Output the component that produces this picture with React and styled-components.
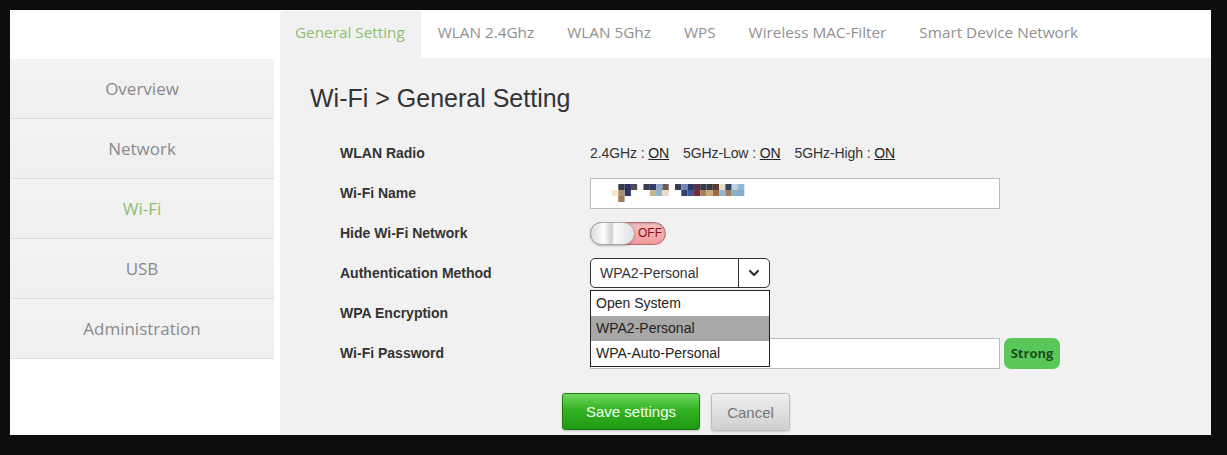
import React from 'react';
import styled, { createGlobalStyle } from 'styled-components';
import { ChevronDown } from 'lucide-react';

const GlobalStyle = createGlobalStyle`
	html, body {
		margin: 0;
		padding: 0;
		background: #0d0d0d;
	}
	* {
		box-sizing: border-box;
	}
`;

const tabs = ['General Setting', 'WLAN 2.4Ghz', 'WLAN 5Ghz', 'WPS', 'Wireless MAC-Filter', 'Smart Device Network'];
const menu = ['Overview', 'Network', 'Wi-Fi', 'USB', 'Administration'];
const authOptions = ['Open System', 'WPA2-Personal', 'WPA-Auto-Personal'];

// blurred ssid, drawn as a mosaic
const mosaic = [
	[0, 1, '#f3e7c8'], [1, 0, '#3a3a48'], [2, 0, '#27305a'], [2, 1, '#2c3566'], [1, 1, '#a88e6c'], [1, 2, '#9a7a58'],
	[3, 0, '#4a4a58'],
	[5, 0, '#3b3b4a'], [6, 0, '#2f3a6a'], [6, 1, '#c9b48e'], [7, 1, '#8fb1cf'], [7, 0, '#8aa6c6'], [8, 0, '#6d5a58'], [8, 1, '#e9dfc9'],
	[10, 0, '#3a3d55'], [11, 0, '#6f87b3'], [11, 1, '#34406e'], [12, 0, '#2a3563'], [12, 1, '#3f5a92'], [13, 0, '#57344a'],
	[13, 1, '#7a2a34'], [14, 1, '#a87e5c'], [14, 0, '#3a3a4a'], [15, 0, '#3a3a42'], [15, 1, '#c9ac7c'], [16, 0, '#5a3a30'], [16, 1, '#9a6a4a'], [17, 0, '#e8dcc0'],
	[17, 1, '#8fb4d6'], [18, 0, '#35425f'], [18, 1, '#a47c5a'], [19, 0, '#bcd0e2'], [19, 1, '#8ab0cf'], [20, 0, '#8fb6d2'],
	[20, 1, '#86acca'],
];

export default function App() {
	return (
		<>
			<GlobalStyle />
			<Frame>
				<Window>
					<TabBar>
						{tabs.map((t, i) => (
							<Tab key={t} active={i === 0}>
								{t}
							</Tab>
						))}
					</TabBar>
					<Sidebar>
						{menu.map((m) => (
							<MenuItem key={m} active={m === 'Wi-Fi'}>
								{m}
							</MenuItem>
						))}
					</Sidebar>
					<Main>
						<Title>Wi-Fi &gt; General Setting</Title>
						<Form>
							<Row>
								<Label>WLAN Radio</Label>
								<Value>
									<Radio>
										2.4GHz : <u>ON</u>
									</Radio>
									<Radio>
										5GHz-Low : <u>ON</u>
									</Radio>
									<Radio>
										5GHz-High : <u>ON</u>
									</Radio>
								</Value>
							</Row>
							<Row>
								<Label>Wi-Fi Name</Label>
								<Value>
									<TextBox>
										<svg width='140' height='18' viewBox='0 0 140 18'>
											{mosaic.map(([c, r, col], i) => (
												<rect key={i} x={c * 6.3} y={r * 6} width='6.3' height='6' fill={col} />
											))}
										</svg>
									</TextBox>
								</Value>
							</Row>
							<Row>
								<Label>Hide Wi-Fi Network</Label>
								<Value>
									<Toggle>
										<Knob />
										<ToggleText>OFF</ToggleText>
									</Toggle>
								</Value>
							</Row>
							<Row>
								<Label>Authentication Method</Label>
								<Value>
									<SelectWrap>
										<Select>
											<SelectText>WPA2-Personal</SelectText>
											<SelectArrow>
												<ChevronDown size={16} strokeWidth={3.2} color='#333' />
											</SelectArrow>
										</Select>
										<Options>
											{authOptions.map((o) => (
												<Option key={o} selected={o === 'WPA2-Personal'}>
													{o}
												</Option>
											))}
										</Options>
									</SelectWrap>
								</Value>
							</Row>
							<Row>
								<Label>WPA Encryption</Label>
								<Value />
							</Row>
							<Row>
								<Label>Wi-Fi Password</Label>
								<Value>
									<TextBox />
									<Strength>Strong</Strength>
								</Value>
							</Row>
							<Buttons>
								<SaveBtn>Save settings</SaveBtn>
								<CancelBtn>Cancel</CancelBtn>
							</Buttons>
						</Form>
					</Main>
				</Window>
			</Frame>
		</>
	);
}

const Frame = styled.div`
	width: 1227px;
	height: 455px;
	padding: 10px 16px 20px 10px;
	background: #0d0d0d;
`;

const Window = styled.div`
	height: 100%;
	background: #fff;
	display: grid;
	grid-template-columns: 270px 1fr;
	grid-template-rows: 49px 1fr;
	overflow: hidden;
`;

const TabBar = styled.div`
	grid-column: 2;
	grid-row: 1;
	display: flex;
	align-items: flex-end;
	border-bottom: 1px solid #ececec;
	font-family: 'Open Sans', 'Noto Sans', sans-serif;
	font-size: 15.3px;
`;

const Tab = styled.div`
	height: 48px;
	margin-bottom: -1px;
	padding: 0 16px 6px 15px;
	display: flex;
	align-items: center;
	margin-right: 2px;
	color: ${(p) => (p.active ? '#8dbd72' : '#909090')};
	background: ${(p) => (p.active ? '#f1f1f1' : 'transparent')};
	border-radius: 4px 4px 0 0;
	white-space: nowrap;
`;

const Sidebar = styled.div`
	grid-column: 1;
	grid-row: 2;
	width: 264px;
	align-self: start;
	font-family: 'Open Sans', 'Noto Sans', sans-serif;
	font-size: 17px;
`;

const MenuItem = styled.div`
	height: 60px;
	display: flex;
	align-items: center;
	justify-content: center;
	padding-bottom: 1px;
	background: linear-gradient(#f3f3f3, #efefef);
	border-bottom: 1px solid #dcdcdc;
	color: ${(p) => (p.active ? '#8cbf73' : '#8a8a8a')};
`;

const Main = styled.div`
	grid-column: 2;
	grid-row: 2;
	background: #f1f1f1;
	padding: 24px 0 0 30px;
	font-family: 'Liberation Sans', Arial, sans-serif;
	color: #333;
`;

const Title = styled.h1`
	margin: 0 0 20px;
	font-size: 25px;
	font-weight: normal;
	line-height: 30px;
	color: #333;
`;

const Form = styled.div`
	width: 780px;
	padding-left: 30px;
`;

const Row = styled.div`
	height: 40px;
	display: flex;
	align-items: center;
`;

const Label = styled.div`
	width: 250px;
	flex-shrink: 0;
	font-size: 14px;
	font-weight: bold;
	color: #333;
`;

const Value = styled.div`
	display: flex;
	align-items: center;
	gap: 4px;
	font-size: 14px;
	color: #333;
`;

const Radio = styled.span`
	margin-right: 10px;
	letter-spacing: -0.1px;
	u {
		color: #222;
	}
`;

const TextBox = styled.div`
	width: 410px;
	height: 31px;
	flex-shrink: 0;
	background: #fff;
	border: 1px solid #bbb;
	padding: 0 0 0 21px;
	display: flex;
	align-items: center;
`;

const Toggle = styled.div`
	position: relative;
	width: 76px;
	height: 23px;
	border-radius: 12px;
	border: 1px solid #b86a6a;
	background: linear-gradient(#f9c2c2, #f19a9a);
	box-shadow: inset 0 1px 2px rgba(0, 0, 0, 0.2);
`;

const Knob = styled.div`
	position: absolute;
	left: -1px;
	top: -1px;
	width: 45px;
	height: 23px;
	border-radius: 12px;
	border: 1px solid #a8a8a8;
	background: linear-gradient(90deg, #dcdcdc 0%, #fdfdfd 30%, #d0d0d0 48%, #fafafa 54%, #e0e0e0 100%);
	box-shadow: 0 1px 2px rgba(0, 0, 0, 0.25);
`;

const ToggleText = styled.span`
	position: absolute;
	left: 47px;
	top: 3px;
	font-size: 12px;
	color: #8a1010;
	font-family: 'Liberation Sans', Arial, sans-serif;
`;

const SelectWrap = styled.div`
	position: relative;
`;

const Select = styled.div`
	width: 180px;
	height: 30px;
	border: 1px solid #333;
	border-radius: 5px;
	background: #fff;
	display: flex;
	align-items: center;
`;

const SelectText = styled.span`
	flex: 1;
	padding-left: 9px;
	font-size: 14px;
	color: #333;
`;

const SelectArrow = styled.span`
	width: 31px;
	height: 100%;
	border-left: 1px solid #333;
	display: flex;
	align-items: center;
	justify-content: center;
`;

const Options = styled.div`
	position: absolute;
	top: 32px;
	left: 0;
	width: 180px;
	background: #fff;
	border: 1px solid #222;
	z-index: 2;
`;

const Option = styled.div`
	height: 25px;
	line-height: 25px;
	padding-left: 5px;
	font-size: 14px;
	color: #222;
	background: ${(p) => (p.selected ? '#a8a8a8' : '#fff')};
`;

const Strength = styled.div`
	width: 56px;
	height: 31px;
	flex-shrink: 0;
	border-radius: 7px;
	background: #5ac75a;
	color: #1b4f1b;
	font-family: 'Open Sans', 'Noto Sans', sans-serif;
	font-size: 13px;
	font-weight: 700;
	display: flex;
	align-items: center;
	justify-content: center;
`;

const Buttons = styled.div`
	width: 672px;
	margin-top: 20px;
	display: flex;
	justify-content: center;
	gap: 11px;
`;

const SaveBtn = styled.button`
	width: 138px;
	height: 37px;
	border: 1px solid #1b7a12;
	border-radius: 3px;
	background: linear-gradient(#6fd85e 0%, #34b324 45%, #1e9a12 100%);
	color: #f4fff0;
	font-family: 'Liberation Sans', Arial, sans-serif;
	font-size: 15px;
	box-shadow: 0 1px 2px rgba(0, 0, 0, 0.2);
`;

const CancelBtn = styled.button`
	width: 79px;
	height: 38px;
	border: 1px solid #bdbdbd;
	border-radius: 3px;
	background: linear-gradient(#efefef, #cfcfcf);
	color: #777;
	font-family: 'Liberation Sans', Arial, sans-serif;
	font-size: 15px;
	box-shadow: 0 1px 2px rgba(0, 0, 0, 0.15);
`;
